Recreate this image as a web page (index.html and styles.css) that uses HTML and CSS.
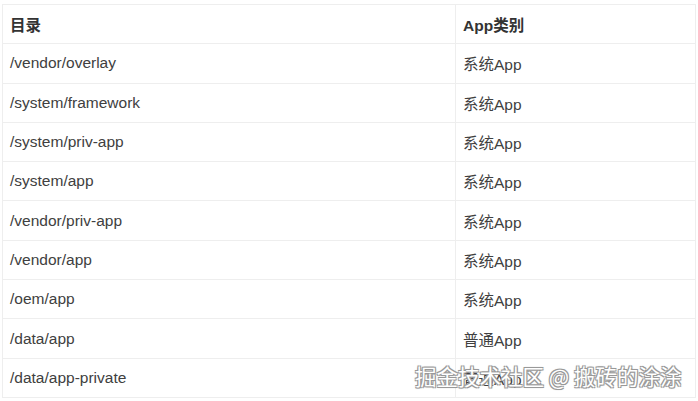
FILE: index.html
```html
<!DOCTYPE html>
<html lang="zh">
<head>
<meta charset="utf-8">
<link rel="stylesheet" href="styles.css">
</head>
<body>
<div class="page">
  <table class="dirs">
    <thead>
      <tr><th class="c1">目录</th><th>App类别</th></tr>
    </thead>
    <tbody>
      <tr><td>/vendor/overlay</td><td>系统App</td></tr>
      <tr><td>/system/framework</td><td>系统App</td></tr>
      <tr><td>/system/priv-app</td><td>系统App</td></tr>
      <tr><td>/system/app</td><td>系统App</td></tr>
      <tr><td>/vendor/priv-app</td><td>系统App</td></tr>
      <tr><td>/vendor/app</td><td>系统App</td></tr>
      <tr><td>/oem/app</td><td>系统App</td></tr>
      <tr><td>/data/app</td><td>普通App</td></tr>
      <tr><td>/data/app-private</td><td>普通App</td></tr>
    </tbody>
  </table>
  <div class="watermark">掘金技术社区 @ 搬砖的涂涂</div>
</div>
</body>
</html>
```
FILE: styles.css
```css
html, body {
  margin: 0;
  padding: 0;
  background: #fff;
}
.page {
  position: relative;
  width: 698px;
  height: 401px;
  overflow: hidden;
  padding: 4px 0 0 2px;
  box-sizing: border-box;
  font-family: "Liberation Sans", Arial, "Noto Sans CJK SC", sans-serif;
}
.dirs {
  border-collapse: collapse;
  width: 694px;
  table-layout: fixed;
  color: #333;
  font-size: 15.5px;
}
.dirs th, .dirs td {
  border: 1px solid #eeeeee;
  height: 39.3px;
  padding: 0 0 0 7px;
  text-align: left;
  vertical-align: middle;
  box-sizing: border-box;
}
.dirs th {
  font-weight: bold;
  color: #333;
}
.dirs .c1 {
  width: 453px;
}
.dirs td {
  color: #404040;
}
.watermark {
  position: absolute;
  left: 415px;
  top: 361px;
  font-size: 21.5px;
  color: #ffffff;
  font-family: "Noto Sans CJK SC", sans-serif;
  text-shadow: -1px -1px 0 #999, 1px -1px 0 #999, -1px 1px 0 #999, 1px 1px 0 #999, 0 0 2px #777;
  white-space: nowrap;
  line-height: 30px;
}
```
